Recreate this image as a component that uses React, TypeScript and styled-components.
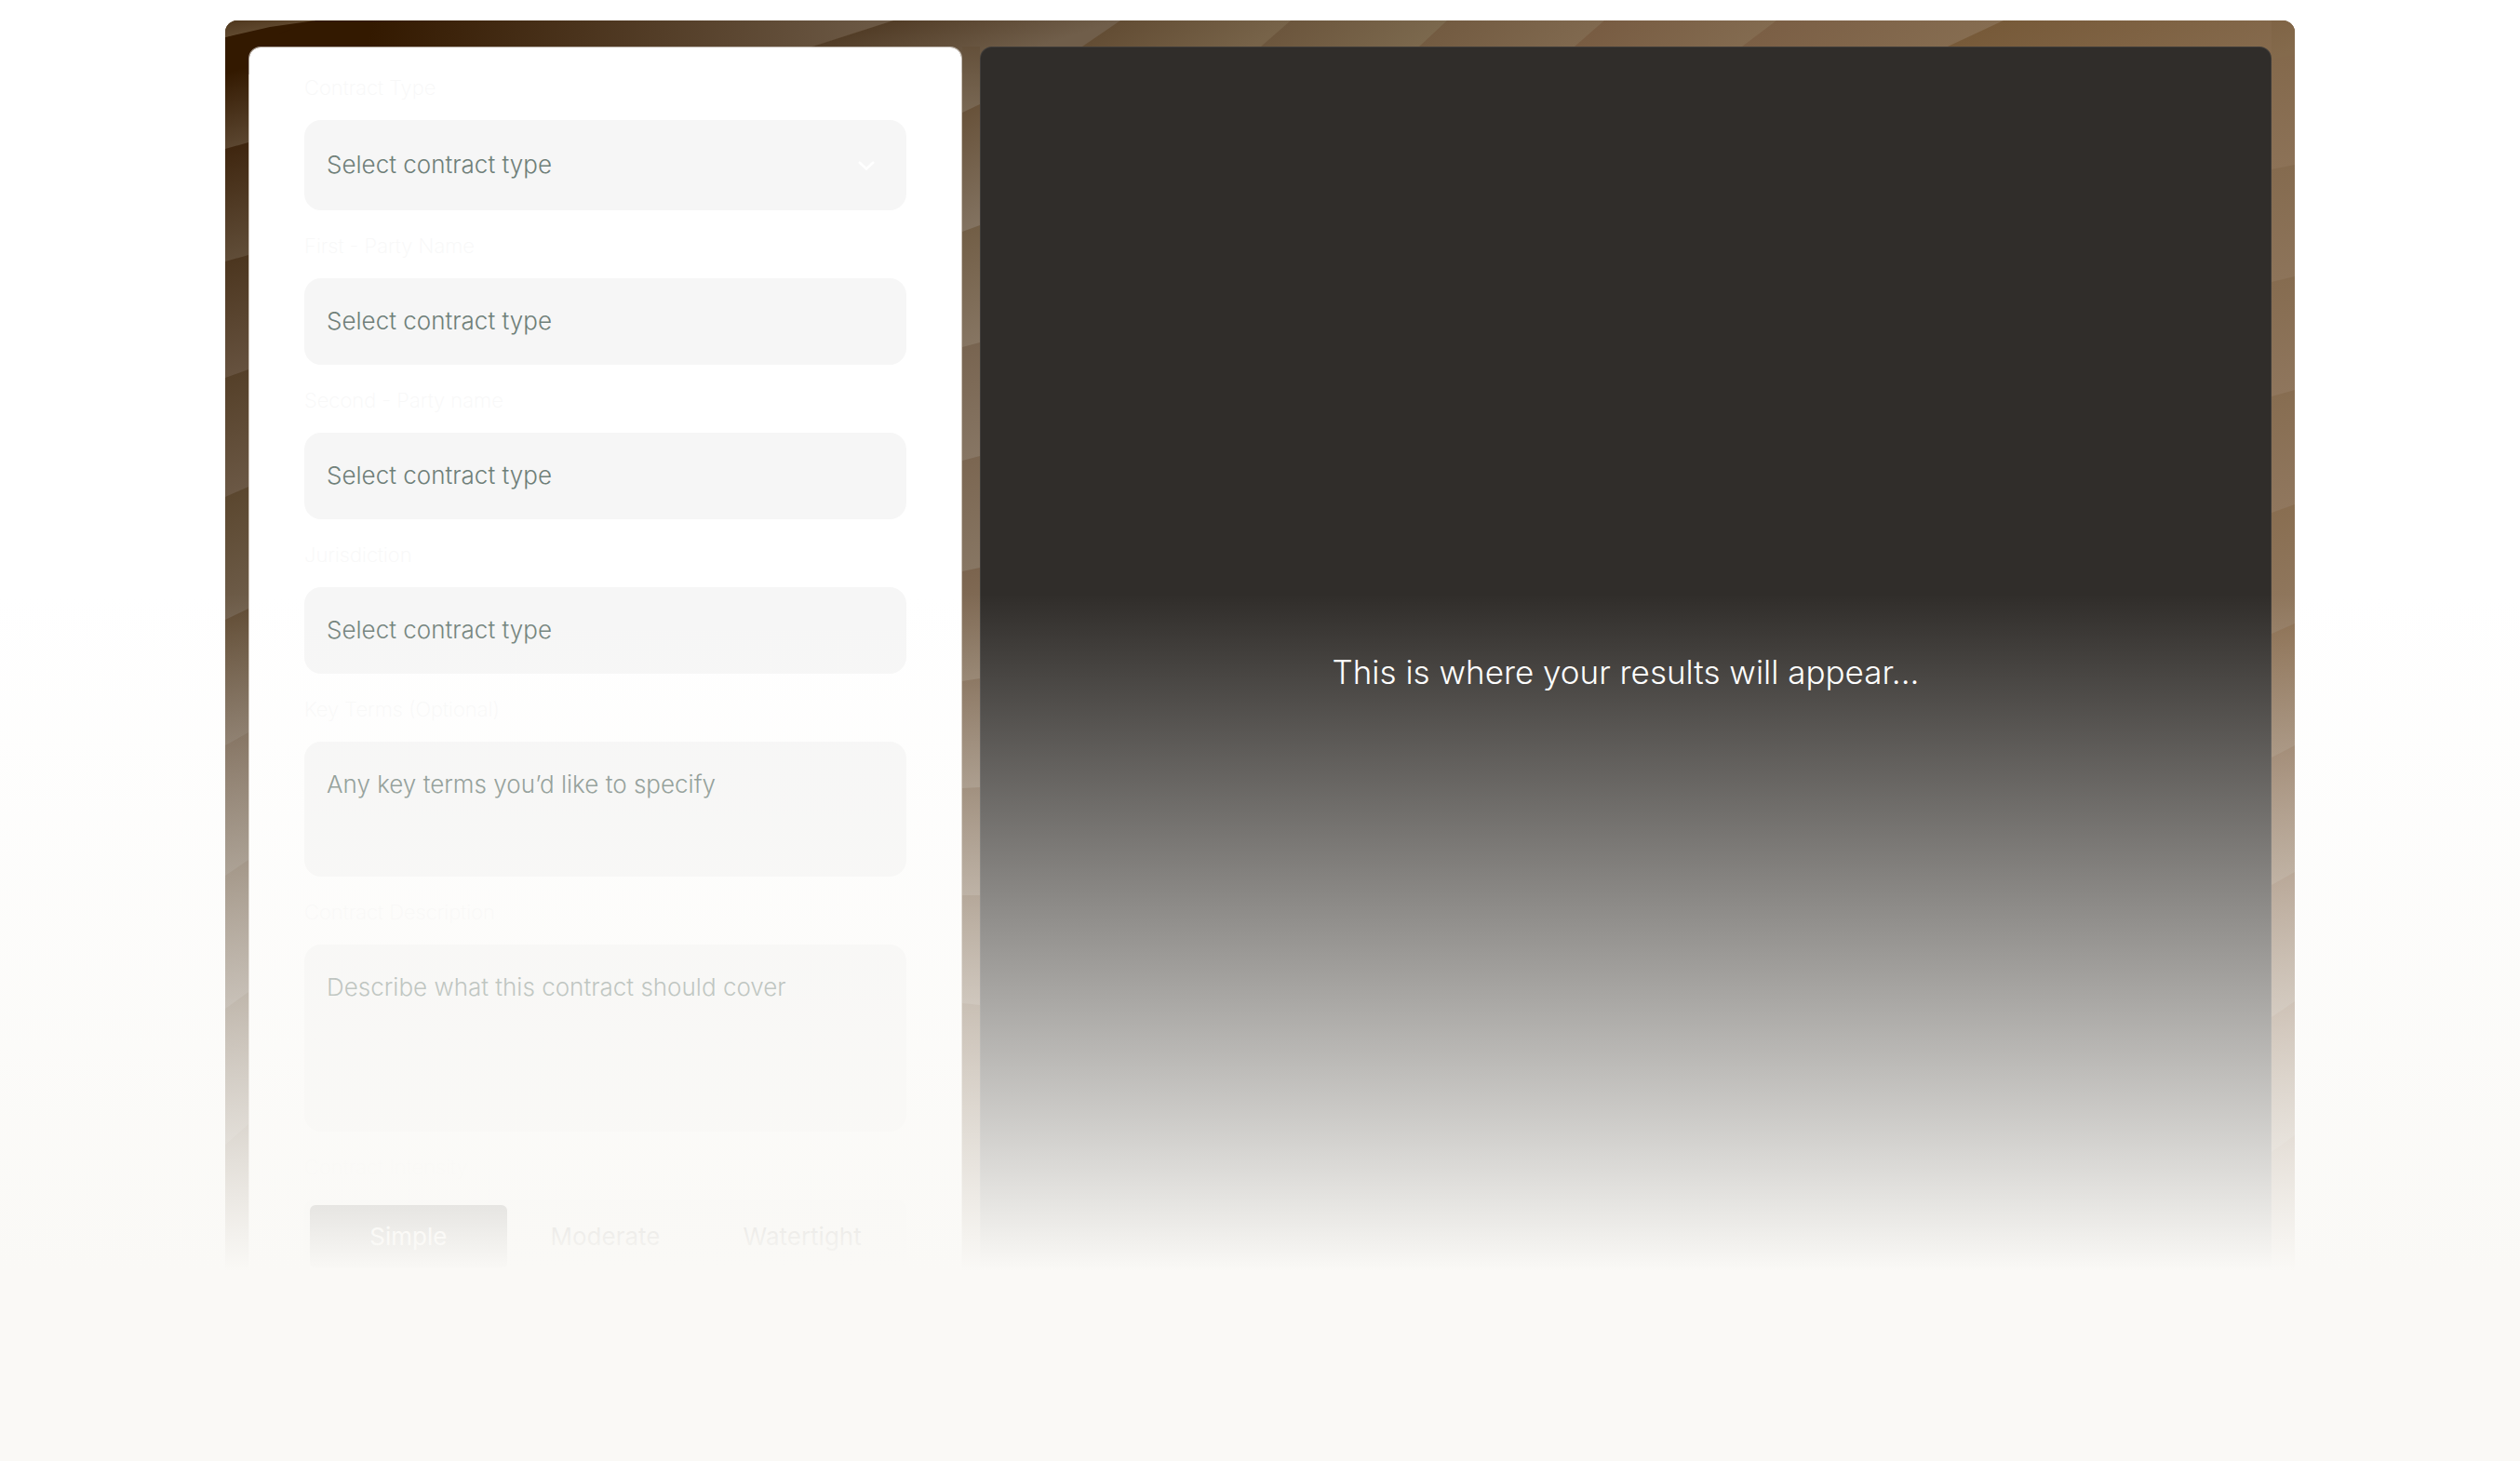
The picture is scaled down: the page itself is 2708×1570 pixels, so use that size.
import React from 'react';
import styled, { createGlobalStyle } from 'styled-components';

const PAPER = '#faf9f6';
const INK = '#302d2a';
const FIELD = '#f6f6f6';
const HINT = '#6f7f79';

const GlobalStyle = createGlobalStyle`
  *, *::before, *::after { box-sizing: border-box; }
  body {
    margin: 0;
    background: #ffffff;
    font-family: Inter, "Liberation Sans", sans-serif;
    font-weight: 300;
  }
`;

const Section = styled.main`
  position: relative;
  min-height: 100vh;
  padding: 22px 24px 0;
  background: #ffffff;
`;

const Fade = styled.div`
  position: absolute;
  inset: 0;
  pointer-events: none;
  background: linear-gradient(to bottom, rgba(250, 249, 246, 0) 638px, ${PAPER} 1366px);
`;

const Frame = styled.div`
  position: relative;
  display: grid;
  grid-template-columns: 767fr 1388fr;
  gap: 19px;
  width: 100%;
  max-width: 2224px;
  margin: 0 auto;
  padding: 28px 25px;
  border-radius: 13px;
  overflow: hidden;
  background: #866c50;
`;

const Backdrop = styled.svg`
  position: absolute;
  top: 0;
  left: 0;
  width: 100%;
  height: 1400px;
`;

const FormCard = styled.form`
  position: relative;
  display: flex;
  flex-direction: column;
  padding: 20px 59px 24px;
  border: 1px solid rgba(255, 255, 255, 0.6);
  border-radius: 13px;
  background: #ffffff;
  background-clip: padding-box;
`;

const ResultCard = styled.section`
  position: relative;
  display: flex;
  align-items: center;
  justify-content: center;
  border: 1px solid rgba(255, 255, 255, 0.08);
  border-radius: 13px;
  background: ${INK};
`;

const ResultText = styled.p`
  margin: 0;
  color: #ffffff;
  font-size: 35px;
  line-height: 44px;
`;

const Field = styled.div`
  display: flex;
  flex-direction: column;
`;

const Label = styled.label`
  margin-top: 15px;
  padding: 10px 0 21px;
  color: #f8f8f8;
  font-size: 22px;
  font-weight: 200;
  line-height: 27px;

  ${Field}:first-child > & {
    margin-top: 0;
  }
`;

const controlCss = `
  display: block;
  width: 100%;
  margin: 0;
  border: 0;
  border-radius: 18px;
  outline: 0;
  background: ${FIELD};
  color: ${HINT};
  font: inherit;
  font-size: 26px;
  line-height: 32px;
`;

const TextInput = styled.input`
  ${controlCss}
  height: 93px;
  padding: 0 24px 2px;
  &::placeholder { color: ${HINT}; opacity: 1; }
`;

const TextArea = styled.textarea<{ $height: number }>`
  ${controlCss}
  height: ${(p) => p.$height}px;
  padding: 30px 24px;
  resize: none;
  &::placeholder { color: ${HINT}; opacity: 1; }
`;

const SelectWrap = styled.div`
  position: relative;
`;

const Select = styled.select`
  ${controlCss}
  height: 97px;
  padding: 0 80px 2px 24px;
  appearance: none;
`;

const Chevron = styled.svg`
  position: absolute;
  top: 50%;
  right: 34px;
  width: 18px;
  height: 10px;
  margin-top: -5px;
  pointer-events: none;
`;

const Group = styled.fieldset`
  display: flex;
  flex-direction: column;
  min-width: 0;
  margin: 0;
  padding: 0;
  border: 0;
`;

const Legend = styled.legend`
  padding: 25px 0 21px;
  color: #f8f8f8;
  font-size: 22px;
  font-weight: 200;
  line-height: 27px;
`;

const Segments = styled.div`
  display: grid;
  grid-template-columns: repeat(3, 1fr);
  padding: 6px;
  border-radius: 10px;
  background: ${FIELD};
`;

const Segment = styled.button<{ $active?: boolean }>`
  height: 68px;
  padding: 0;
  border: 0;
  border-radius: 6px;
  background: ${(p) => (p.$active ? INK : 'transparent')};
  color: ${(p) => (p.$active ? '#ffffff' : INK)};
  font: inherit;
  font-size: 26px;
  font-weight: 400;
  line-height: 32px;
`;

type Stop = [string, string];

/* Each strip lists the slanted edges between rays and the [start, end] shade of each ray. */
const LEFT_EDGES = [[-90, -110], [40, 33], [160, 153], [281, 274], [406, 397], [534, 523], [666, 654], [801, 787], [941, 924], [1084, 1066], [1230, 1208], [1420, 1400]];
const LEFT_SHADES: Stop[] = [
  ['#2e1700', '#604a30'], ['#331900', '#5b4630'], ['#3f260f', '#604d38'], ['#4c361f', '#66523f'],
  ['#554029', '#6b5845'], ['#5b472f', '#6f5e4b'], ['#604b33', '#72604d'], ['#69543f', '#766552'],
  ['#6c5842', '#7a6957'], ['#6c5842', '#7c6b58'], ['#6e5a44', '#7c6b58'],
];

const MID_EDGES = [[50, 50], [121, 112], [249, 242], [373, 368], [495, 490], [614, 610], [732, 729], [847, 846], [962, 962], [1078, 1080], [1400, 1400]];
const MID_SHADES: Stop[] = [
  ['#64503a', '#796854'], ['#68523a', '#827260'], ['#725e46', '#867562'], ['#786450', '#877664'],
  ['#7b6651', '#877663'], ['#7b644e', '#8b7863'], ['#7d664f', '#8d7a66'], ['#7e6750', '#8d7a66'],
  ['#7e6750', '#8d7a66'], ['#7e6750', '#8d7a66'],
];

const RIGHT_EDGES = [[10, 0], [63, 59], [182, 177], [303, 297], [426, 419], [551, 542], [681, 670], [814, 801], [951, 937], [1093, 1076], [1238, 1220], [1400, 1400]];
const RIGHT_SHADES: Stop[] = [
  ['#7e6243', '#846a4c'], ['#84694c', '#8c7257'], ['#856b4f', '#8d745a'], ['#866c50', '#8f765d'],
  ['#876d51', '#90775e'], ['#896e51', '#917960'], ['#8b6f52', '#937b63'], ['#8b6f55', '#957e67'],
  ['#8c7057', '#96806a'], ['#8c7057', '#96806a'], ['#8c7057', '#96806a'],
];

/* Top strip edges: x at the strip's upper line (22) and at its lower line (50). */
const TOP_EDGES = [[339, 190], [960, 873], [1204, 1163], [1387, 1355], [1555, 1525], [1724, 1692], [1909, 1872], [2153, 2093], [2520, 2460]];
const TOP_SHADES: Stop[] = [
  ['#331900', '#6b5844'], ['#523d27', '#705e4a'], ['#634d34', '#776349'], ['#6c563d', '#7b684d'],
  ['#735b41', '#80694f'], ['#785c42', '#836b50'], ['#7b5f45', '#866d51'], ['#775a39', '#866b4e'],
];

const Strip = ({ id, x, w, edges, shades }: { id: string; x: number; w: number; edges: number[][]; shades: Stop[] }) => (
  <g>
    {shades.map(([from, to], i) => {
      const [a, b] = edges[i];
      const [c, d] = edges[i + 1];
      const slope = (b - a) / w;
      const run = (c - a) / (1 + slope * slope);
      return (
        <React.Fragment key={i}>
          <linearGradient id={`${id}${i}`} gradientUnits="userSpaceOnUse" x1={x} y1={a} x2={x - slope * run} y2={a + run}>
            <stop offset={id === 'left' && i === 1 ? 0.32 : 0} stopColor={from} />
            <stop offset="1" stopColor={to} />
          </linearGradient>
          <path d={`M${x} ${a} L${x + w} ${b} V${d + 1} L${x} ${c + 1} Z`} fill={`url(#${id}${i})`} />
        </React.Fragment>
      );
    })}
  </g>
);

const Rays = () => (
  <Backdrop viewBox="242 22 2224 1400" preserveAspectRatio="none" aria-hidden="true">
    <g>
      {TOP_SHADES.map(([from, to], i) => {
        const [a, b] = TOP_EDGES[i];
        const [c, d] = TOP_EDGES[i + 1];
        const dx = a - b;
        const k = ((c - a) * 28) / (dx * dx + 784);
        const first = i === 0;
        return (
          <React.Fragment key={i}>
            <linearGradient
              id={`top${i}`}
              gradientUnits="userSpaceOnUse"
              x1={first ? 400 : a}
              y1={22}
              x2={first ? 920 : a + k * 28}
              y2={first ? 120 : 22 + k * dx}
            >
              <stop offset="0" stopColor={from} />
              <stop offset="1" stopColor={to} />
            </linearGradient>
            <path d={`M${a} 22 L${b - dx} 78 H${d - (c - d) + 1} L${c + 1} 22 Z`} fill={`url(#top${i})`} />
          </React.Fragment>
        );
      })}
    </g>
    <linearGradient id="corner" gradientUnits="userSpaceOnUse" x1="262" y1="-10" x2="270" y2="36">
      <stop offset="0" stopColor="#331900" />
      <stop offset="1" stopColor="#614a30" />
    </linearGradient>
    <Strip id="left" x={242} w={25} edges={LEFT_EDGES} shades={LEFT_SHADES} />
    <path d="M267 22 H339 L267 48 Z" fill="#331900" />
    <path d="M267 22 H300 V80 H267 Z" fill="#331900" />
    <path d="M242 22 H339 L290 29 L242 40 Z" fill="url(#corner)" />
    <Strip id="mid" x={1034} w={19} edges={MID_EDGES} shades={MID_SHADES} />
    <Strip id="right" x={2441} w={25} edges={RIGHT_EDGES} shades={RIGHT_SHADES} />
  </Backdrop>
);

export default function App() {
  const [level, setLevel] = React.useState('Simple');
  return (
    <>
      <GlobalStyle />
      <Section>
        <Frame>
          <Rays />
          <FormCard>
            <Field>
              <Label htmlFor="type">Contract Type</Label>
              <SelectWrap>
                <Select id="type" defaultValue="">
                  <option value="">Select contract type</option>
                </Select>
                <Chevron viewBox="0 0 18 10" fill="none" stroke="#ffffff" strokeWidth="2.5" aria-hidden="true">
                  <path d="M1 1 L9 8.5 L17 1" />
                </Chevron>
              </SelectWrap>
            </Field>
            <Field>
              <Label htmlFor="first">First - Party Name</Label>
              <TextInput id="first" placeholder="Select contract type" />
            </Field>
            <Field>
              <Label htmlFor="second">Second - Party name</Label>
              <TextInput id="second" placeholder="Select contract type" />
            </Field>
            <Field>
              <Label htmlFor="jurisdiction">Jurisdiction</Label>
              <TextInput id="jurisdiction" placeholder="Select contract type" />
            </Field>
            <Field>
              <Label htmlFor="terms">Key Terms (Optional)</Label>
              <TextArea id="terms" $height={145} placeholder="Any key terms you’d like to specify" />
            </Field>
            <Field>
              <Label htmlFor="description">Contract Description</Label>
              <TextArea id="description" $height={201} placeholder="Describe what this contract should cover" />
            </Field>
            <Group>
              <Legend>Contract Intensity</Legend>
              <Segments>
                {['Simple', 'Moderate', 'Watertight'].map((name) => (
                  <Segment key={name} type="button" $active={name === level} onClick={() => setLevel(name)}>
                    {name}
                  </Segment>
                ))}
              </Segments>
            </Group>
          </FormCard>
          <ResultCard>
            <ResultText>This is where your results will appear...</ResultText>
          </ResultCard>
        </Frame>
        <Fade />
      </Section>
    </>
  );
}
